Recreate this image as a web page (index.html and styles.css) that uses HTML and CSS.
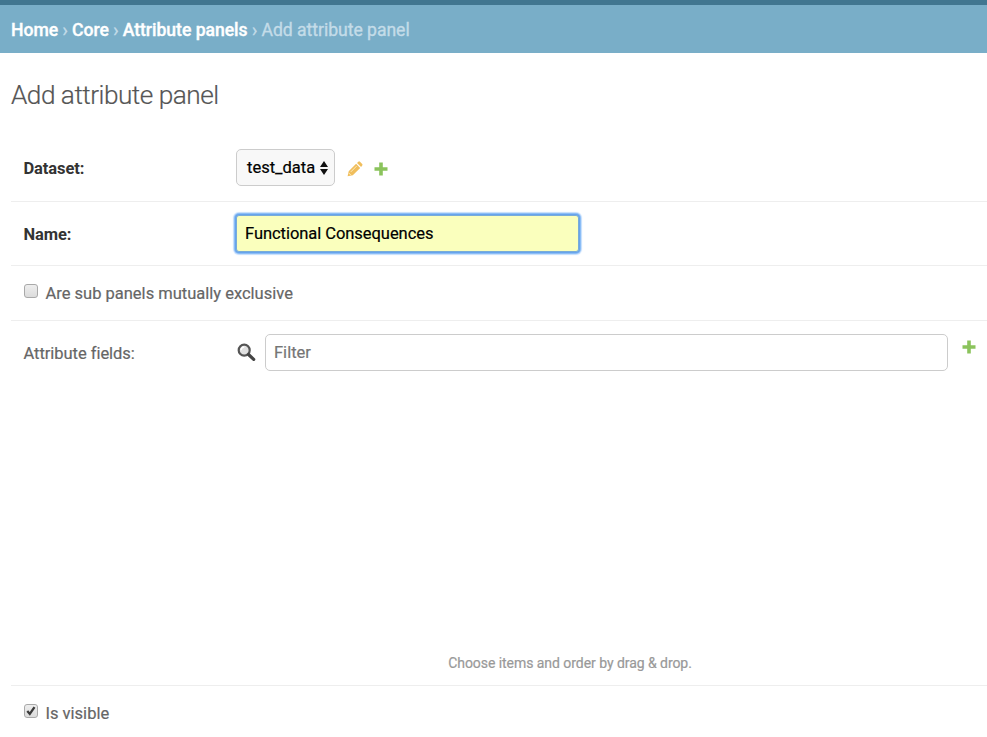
FILE: index.html
```html
<!DOCTYPE html>
<html lang="en">
<head>
<meta charset="utf-8">
<title>Add attribute panel</title>
<link rel="stylesheet" href="styles.css">
</head>
<body>
<header class="topbar"></header>
<nav class="breadcrumbs"><a href="#">Home</a> › <a href="#">Core</a> › <a href="#">Attribute panels</a> › <span>Add attribute panel</span></nav>
<main class="content">
  <h1 class="title">Add attribute panel</h1>
  <form class="form">
    <div class="row row-dataset">
      <label class="label required">Dataset:</label>
      <div class="select"><span>test_data</span>
        <svg width="8" height="16" viewBox="0 0 8 16"><path d="M0 7 4 1l4 6zM0 9h8l-4 6z"/></svg>
      </div>
      <svg class="pencil" width="16" height="16" viewBox="0 0 16 16"><path fill="#f0be5c" d="M.6 15.2 1.7 10.2 9.1 2.8l4.1 4.1-7.4 7.4zM10 1.9 11.3.7q.9-.7 1.7.1l2.2 2.2q.7.8 0 1.6L14.1 5.9z"/><path d="M3.8 10.9 9.6 5.1M1.8 12l2.1 2.1" stroke="#fff4d5" stroke-width=".8" fill="none"/></svg>
      <svg class="plus" width="14" height="14" viewBox="0 0 14 14"><path d="M5.2.5h3.6v4.7h4.7v3.6H8.8v4.7H5.2V8.8H.5V5.2h4.7z"/></svg>
    </div>
    <div class="row row-name">
      <label class="label required" for="name">Name:</label>
      <input class="field name" id="name" type="text" value="Functional Consequences">
    </div>
    <div class="row row-exclusive">
      <span class="check"></span><span class="check-label">Are sub panels mutually exclusive</span>
    </div>
    <div class="row row-fields">
      <label class="label" for="filter">Attribute fields:</label>
      <svg class="search" width="19" height="19" viewBox="0 0 19 19"><circle cx="7.2" cy="7.2" r="5.5" fill="#e0e0e0" stroke="#555" stroke-width="2.2"/><path d="M4 7.3a3.3 3.3 0 0 1 3.3-3.4" stroke="#fff" stroke-width="1.5" fill="none"/><path d="m11.5 11.5 5.2 4.9" stroke="#444" stroke-width="3.2" stroke-linecap="round"/></svg>
      <div class="selector">
        <input class="field filter" id="filter" type="text" placeholder="Filter">
        <p class="help">Choose items and order by drag &amp; drop.</p>
      </div>
      <svg class="plus plus-end" width="14" height="14" viewBox="0 0 14 14"><path d="M5.2.5h3.6v4.7h4.7v3.6H8.8v4.7H5.2V8.8H.5V5.2h4.7z"/></svg>
    </div>
    <div class="row row-visible">
      <span class="check"><svg width="12" height="12" viewBox="0 0 12 12"><path d="m2.3 6 2.5 2.9 4.7-6.7" fill="none" stroke="#3b3b3b" stroke-width="2.3"/></svg></span><span class="check-label">Is visible</span>
    </div>
  </form>
</main>
</body>
</html>
```

FILE: styles.css
```css
* { box-sizing: border-box; }
body { margin: 0; height: 737px; overflow: hidden; background: #fff; color: #666; font: 16.5px/20px Roboto, "Liberation Sans", sans-serif; -webkit-text-stroke: .2px; }
.topbar { height: 5px; background: #417690; }
.breadcrumbs { height: 48px; padding: 15px 11px; background: #79aec8; color: #c4dce8; font-size: 17.6px; letter-spacing: -.035px; white-space: nowrap; -webkit-text-stroke: .35px; }
.breadcrumbs a { color: #fff; text-decoration: none; font-weight: 500; }
.content { padding-left: 11px; }
.title { height: 82px; margin: 0; padding-top: 26px; font-size: 26.2px; line-height: 32px; font-weight: 300; color: #555; letter-spacing: -.5px; }
.row { display: flex; align-items: flex-start; padding-left: 12.5px; border-bottom: 1px solid #eee; }
.label { flex: none; width: 212.5px; padding-top: 10px; letter-spacing: -.04px; }
.required { color: #333; font-weight: 700; letter-spacing: -.1px; -webkit-text-stroke: 0; }
.row-dataset { height: 67px; padding-top: 14px; }
.select { display: flex; align-items: center; justify-content: space-between; width: 99px; height: 37px; padding: 0 6px 0 10px; border: 1px solid #ccc; border-radius: 5px; background: #f8f8f8; color: #000; }
.select svg { fill: #111; }
.pencil { margin: 12px 0 0 12px; }
.plus { flex: none; fill: #8bc35c; margin: 12px 0 0 11px; }
.row-dataset .plus { margin: 12.5px 0 0 10.5px; }
.row-name { height: 64px; padding-top: 13px; }
.field { height: 37px; padding: 0 8px; border: 1px solid #ccc; border-radius: 5px; outline: 0; background: #fff; color: #000; font: inherit; }
.name { width: 343px; letter-spacing: -.05px; border-color: #79acd8; border-radius: 3px; background: #faffbd; box-shadow: 0 0 0 1px #67a4ec, 0 0 0 2px #8bbdf6, 0 0 1px 3px #c4defc; }
.row-exclusive { height: 55px; padding-top: 17px; }
.check { flex: none; width: 14px; height: 14px; margin: 1px 8px 0 0; border: 1px solid #a9a9a9; border-radius: 3px; background: linear-gradient(#eee, #dcdcdc); }
.check svg { display: block; }
.check-label { padding-top: 1px; }
.row-fields { height: 365px; padding-top: 13px; }
.search { flex: none; margin: 8.5px 9.5px 0 .5px; }
.selector { display: flex; flex-direction: column; width: 683px; height: 100%; }
.filter::placeholder { color: #757575; opacity: 1; }
.help { width: 610px; margin: auto 0 12px; text-align: center; color: #999; font-size: 14px; letter-spacing: -.05px; }
.plus-end { margin: 6px 0 0 14px; }
.row-visible { height: 51px; padding-top: 17px; border: 0; }
```
